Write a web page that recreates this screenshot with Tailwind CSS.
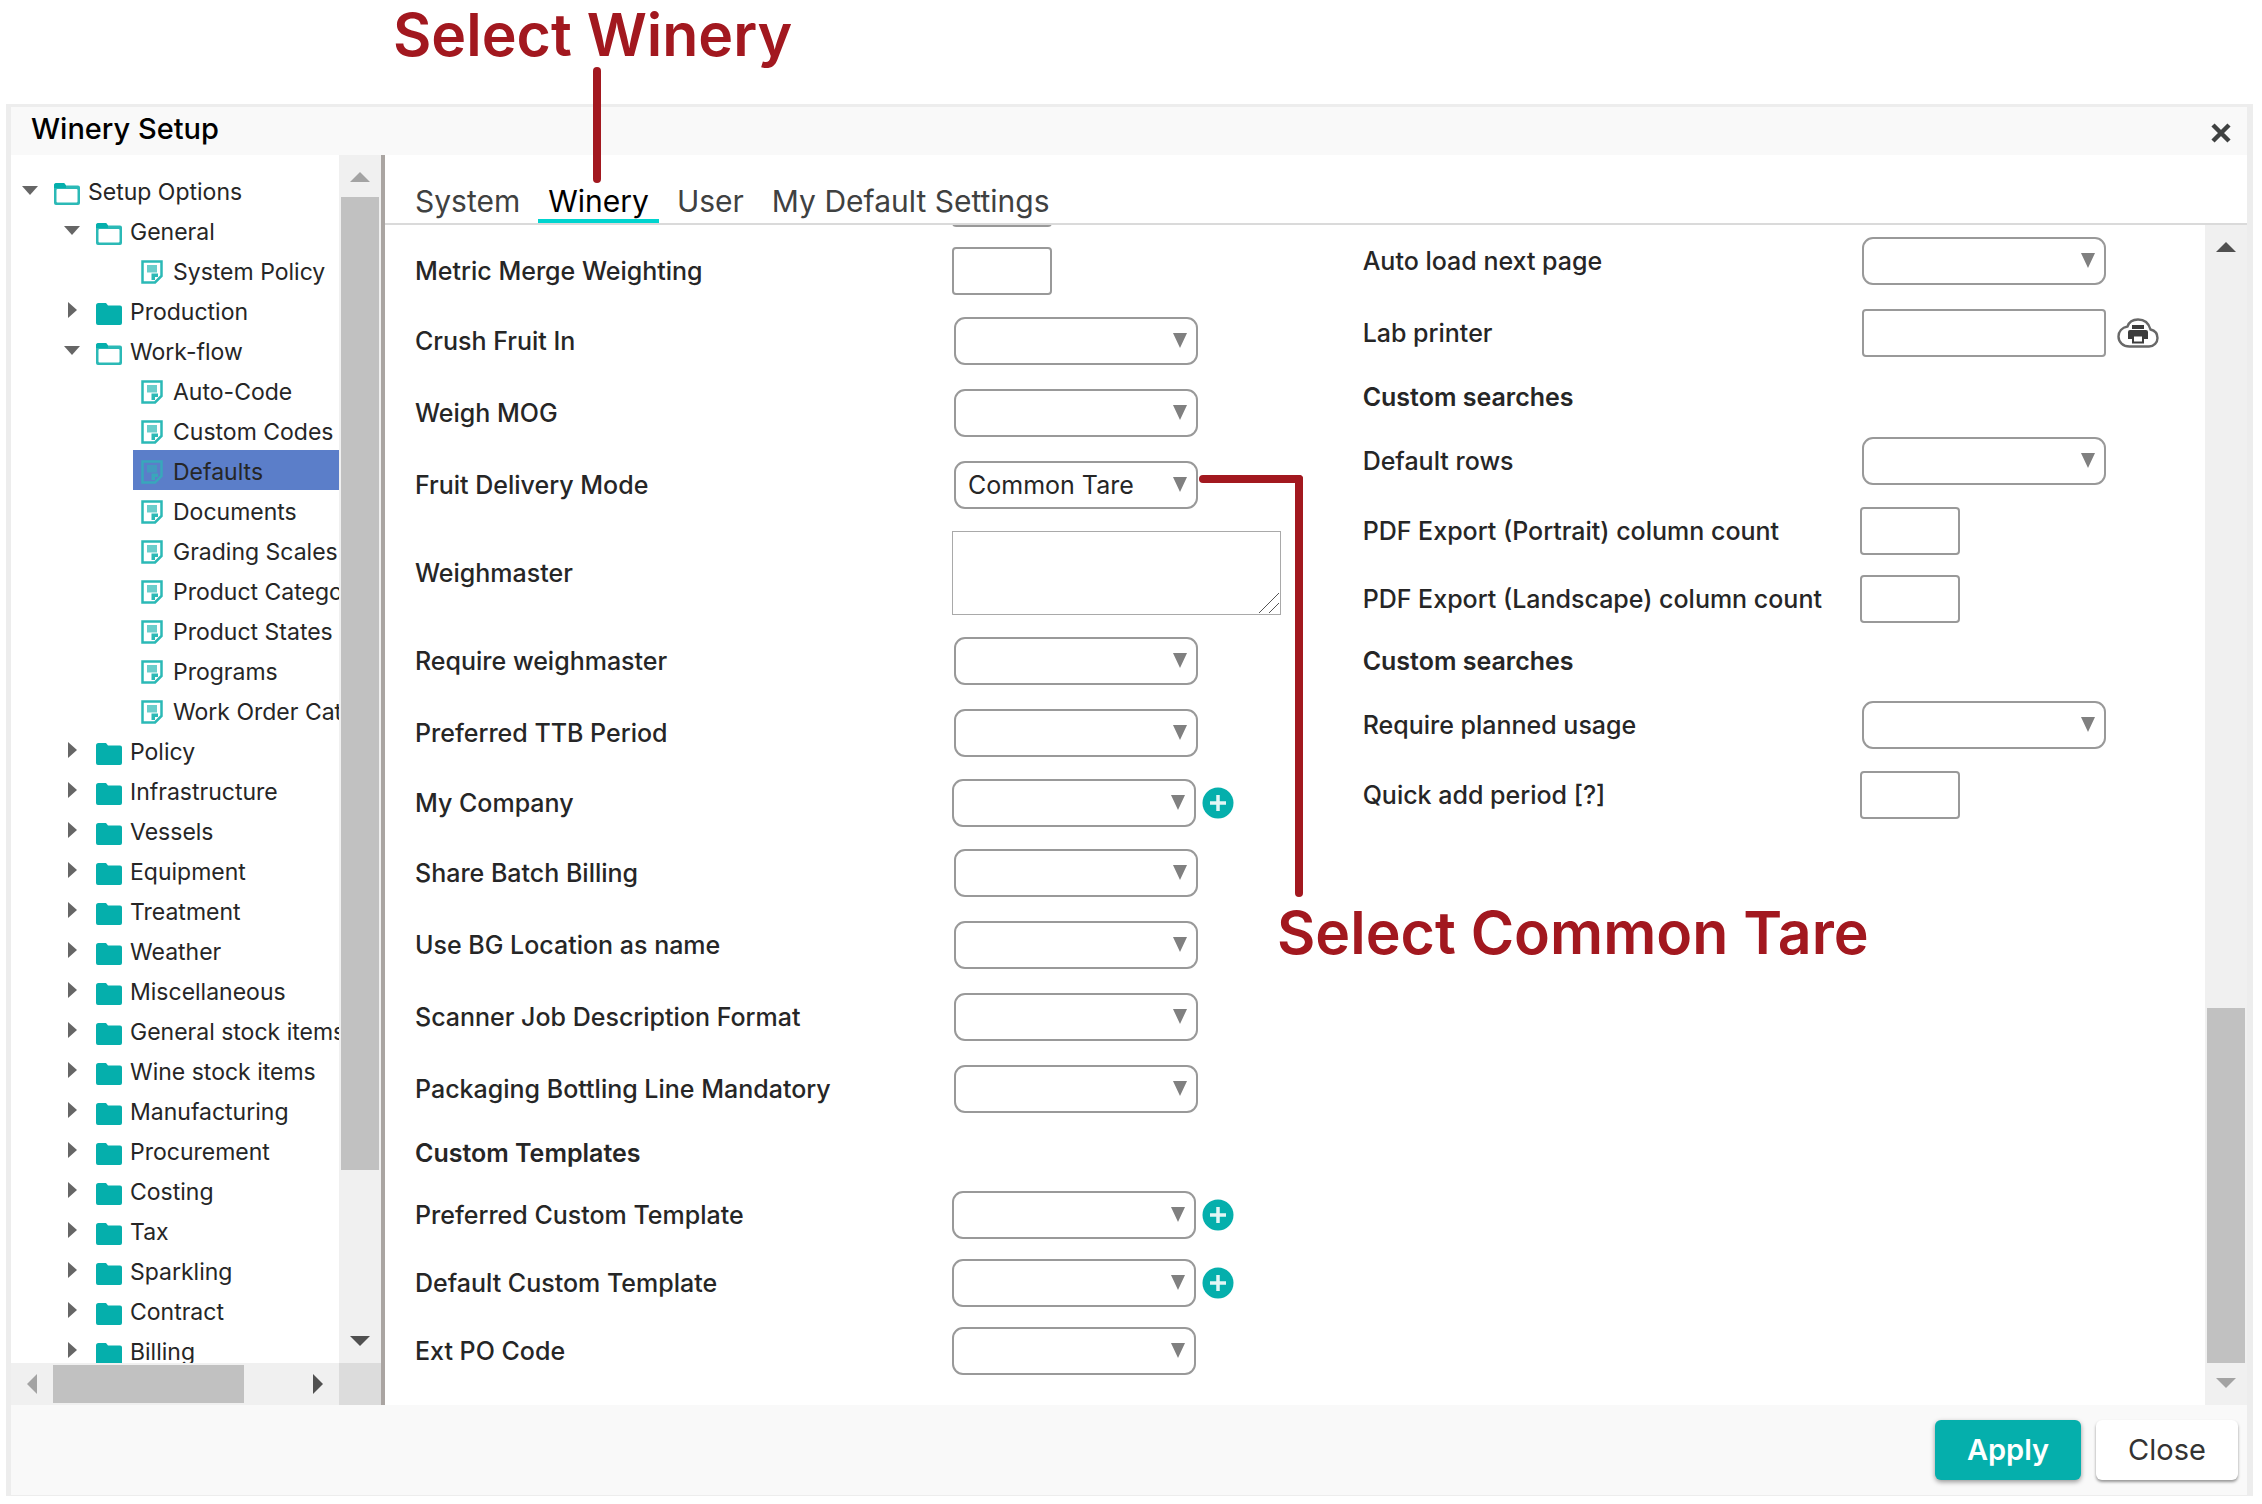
<!DOCTYPE html>
<html lang="en">
<head>
  <title>Winery Setup</title>
  <meta charset="utf-8">
  <meta name="viewport" content="width=device-width, initial-scale=1.0">
  <script src="https://cdn.jsdelivr.net/npm/@tailwindcss/browser@4"></script>
</head>

<body class="bg-white font-['Inter','Open_Sans',sans-serif] text-[#262626]">

  <!-- icons shared by the tree and the form -->
  <svg class="hidden">
    <symbol id="folder-open" viewBox="0 0 28 24">
      <path d="M1 3.500Q1 1 3.500 1H11L13 3.500H25Q27 3.500 27 5.500V21Q27 23 25 23H3Q1 23 1 21Z" fill="#2bb9b6"/>
      <path d="M1 3.500Q1 1 3.500 1H11L13 3.500V6H1Z" fill="#05afac"/>
      <rect x="3.500" y="7" width="21" height="13.500" rx="1" fill="#fff"/>
    </symbol>
    <symbol id="folder" viewBox="0 0 28 24">
      <path d="M1 3.500Q1 1 3.500 1H11L13 3.500H25Q27 3.500 27 5.500V21Q27 23 25 23H3Q1 23 1 21Z" fill="#05afac"/>
    </symbol>
    <symbol id="page" viewBox="0 0 22 24">
      <path d="M1.500 1.500H20.500V16L14 22.500H1.500Z" fill="none" stroke="#2bb9b6" stroke-width="2.500"/>
      <path d="M6 5H16V12.500H6Z" fill="#2bb9b6" fill-opacity=".7"/>
      <path d="M10.500 20V13.500H17V17H14V20Z" fill="#2bb9b6"/>
    </symbol>
    <symbol id="plus" viewBox="0 0 32 32">
      <circle cx="16" cy="16" r="15.500" fill="#05afac"/>
      <path d="M16 8V24M8 16H24" stroke="#e4f6f5" stroke-width="3.500"/>
    </symbol>
    <symbol id="cloud-print" viewBox="0 0 42 30">
      <path d="M12.500 28.500H32C37 28.500 40.500 24.500 40.500 20C40.500 15 37.500 12.500 33.500 11.500C32 6 28 1.500 21 1.500C15.500 1.500 12 4 10.500 8.500C5 9.500 1.500 13.500 1.500 18.500C1.500 24 6 28.500 12.500 28.500Z" fill="none" stroke="#686868" stroke-width="2.400"/>
      <path d="M15 7H27V11H15Z" fill="#3c3c3c"/>
      <path d="M13 12H29Q31 12 31 14V21H26V18H16V21H11V14Q11 12 13 12Z" fill="#3c3c3c"/>
      <path d="M16 17.500H26V24.500H16Z" fill="#fff" stroke="#3c3c3c" stroke-width="2"/>
    </symbol>
  </svg>

  <div class="relative flex h-screen flex-col pt-[104px] pr-[9px] pb-2 pl-[6px]">
    <div class="flex min-h-0 flex-1 flex-col border-t-3 border-r-6 border-b border-l-5 border-[#ededed] bg-white">

      <header class="flex h-12 shrink-0 items-start justify-between bg-[#f9f9f9] pr-4 pl-5">
        <h1 class="text-[29px] leading-[44px] font-medium text-black">Winery Setup</h1>
        <button type="button" aria-label="Close dialog" class="mt-4">
          <svg class="size-5" viewBox="0 0 20 20"><path d="M2 2L18 18M18 2L2 18" stroke="#3f4141" stroke-width="4.500"/></svg>
        </button>
      </header>

      <div class="flex min-h-0 flex-1">

        <!-- setup tree -->
        <aside class="flex w-[374px] shrink-0 flex-col border-r-4 border-[#aaa5a2]">
          <div class="flex min-h-0 flex-1">
            <ul id="tree" class="min-w-0 flex-1 overflow-hidden pt-[15px] text-[23px] leading-8 whitespace-nowrap"></ul>
            <div class="flex w-[42px] flex-col bg-[#f0f0f0] px-[2px]">
              <svg class="h-[42px] w-full shrink-0" viewBox="0 0 38 42"><path d="M9 27L19 17L29 27Z" fill="#a3a3a3"/></svg>
              <div class="h-[973px] bg-[#c1c1c1]"></div>
              <svg class="mt-auto h-[42px] w-full shrink-0" viewBox="0 0 38 42"><path d="M9 15H29L19 25Z" fill="#505050"/></svg>
            </div>
          </div>
          <div class="flex h-[42px] shrink-0 bg-[#f0f0f0]">
            <svg class="h-full w-[42px] shrink-0" viewBox="0 0 42 42"><path d="M26 11V31L16 21Z" fill="#a3a3a3"/></svg>
            <div class="my-[2px] w-[191px] bg-[#c1c1c1]"></div>
            <svg class="ml-auto h-full w-[42px] shrink-0" viewBox="0 0 42 42"><path d="M16 11V31L26 21Z" fill="#505050"/></svg>
            <div class="w-[42px] shrink-0 bg-[#dcdcdc]"></div>
          </div>
        </aside>

        <main class="flex min-w-0 flex-1 flex-col">
          <nav class="flex h-[70px] shrink-0 items-end gap-2 border-b-2 border-[#dadada] pl-5 text-[30px] leading-9 text-[#3f4141]">
            <a href="#" class="border-b-4 border-transparent px-[10px]">System</a>
            <a href="#" class="border-b-4 border-[#00d4cf] px-[10px] text-black">Winery</a>
            <a href="#" class="border-b-4 border-transparent px-[10px]">User</a>
            <a href="#" class="border-b-4 border-transparent px-[10px]">My Default Settings</a>
          </nav>

          <div class="flex min-h-0 flex-1">
            <form class="grid min-w-0 flex-1 grid-cols-[9fr_8fr] items-start overflow-hidden pl-[30px] text-[25px] leading-8 font-medium">
              <div id="left" class="-mt-14"></div>
              <div id="right"></div>
            </form>
            <div class="flex w-[42px] shrink-0 flex-col bg-[#f0f0f0] px-[2px]">
              <svg class="h-[42px] w-full shrink-0" viewBox="0 0 38 42"><path d="M9 27L19 17L29 27Z" fill="#505050"/></svg>
              <div class="mt-auto h-[355px] bg-[#c1c1c1]"></div>
              <svg class="h-[42px] w-full shrink-0" viewBox="0 0 38 42"><path d="M9 15H29L19 25Z" fill="#a3a3a3"/></svg>
            </div>
          </div>
        </main>
      </div>

      <footer class="flex h-[90px] shrink-0 items-center justify-end gap-[15px] bg-[#f9f9f9] pr-[9px] text-[29px]">
        <button type="button" class="h-[60px] w-[146px] rounded-md bg-[#05afac] font-semibold text-white shadow-[0_2px_5px_rgba(0,0,0,0.4)]">Apply</button>
        <button type="button" class="h-[60px] w-[142px] rounded-md bg-white text-[#333] shadow-[0_2px_3px_rgba(0,0,0,0.4)]">Close</button>
      </footer>
    </div>

    <!-- callouts -->
    <p class="absolute top-0 left-[393px] text-[59px] leading-[70px] font-semibold whitespace-nowrap text-[#a2181f]">Select Winery</p>
    <div class="absolute top-[67px] left-[593px] h-[116px] w-2 rounded-full bg-[#a2181f]"></div>
    <div class="absolute top-[475px] left-[1199px] h-[422px] w-[104px]">
      <div class="absolute top-0 left-0 h-2 w-full rounded-full bg-[#a2181f]"></div>
      <div class="absolute top-0 right-0 h-full w-2 rounded-full bg-[#a2181f]"></div>
    </div>
    <p class="absolute top-[898px] left-[1277px] text-[59px] leading-[70px] font-semibold whitespace-nowrap text-[#a2181f]">Select Common Tare</p>
  </div>

  <script>
    // [level, name]; level 2 entries are leaves
    const open = ['Setup Options', 'General', 'Work-flow'];
    const nodes = [
      [0, 'Setup Options'], [1, 'General'], [2, 'System Policy'], [1, 'Production'], [1, 'Work-flow'],
      [2, 'Auto-Code'], [2, 'Custom Codes'], [2, 'Defaults'], [2, 'Documents'], [2, 'Grading Scales'],
      [2, 'Product Categories'], [2, 'Product States'], [2, 'Programs'], [2, 'Work Order Categories'],
      [1, 'Policy'], [1, 'Infrastructure'], [1, 'Vessels'], [1, 'Equipment'], [1, 'Treatment'], [1, 'Weather'],
      [1, 'Miscellaneous'], [1, 'General stock items'], [1, 'Wine stock items'], [1, 'Manufacturing'],
      [1, 'Procurement'], [1, 'Costing'], [1, 'Tax'], [1, 'Sparkling'], [1, 'Contract'], [1, 'Billing'],
    ];
    const indent = ['pl-[9px]', 'pl-[51px]', 'pl-[122px]'];

    document.getElementById('tree').innerHTML = nodes.map(([level, name]) => {
      const text = `<span class="pt-1">${name}</span>`;
      if (level === 2) {
        const active = name === 'Defaults';
        return `<li class="${indent[2]}"><a href="#" class="flex h-10 items-center gap-[10px] pl-2 ${active ? 'bg-[#5b7ec9]' : ''}">
          <svg class="mt-1 h-6 w-[22px] shrink-0 ${active ? 'opacity-70' : ''}"><use href="#page"/></svg>${text}</a></li>`;
      }
      const isOpen = open.includes(name);
      const arrow = isOpen ? 'M2 6H18L10 15Z' : 'M6 2V18L15 10Z';
      return `<li class="${indent[level]}"><a href="#" class="flex h-10 items-center">
        <svg class="size-5 shrink-0" viewBox="0 0 20 20"><path d="${arrow}" fill="#666"/></svg>
        <svg class="mt-2 mr-[7px] ml-[13px] h-6 w-7 shrink-0"><use href="#${isOpen ? 'folder-open' : 'folder'}"/></svg>${text}</a></li>`;
    }).join('');

    const box = 'h-12 border-2 border-[#999] bg-white';
    const select = (id, text) => `<div class="relative">
      <select id="${id}" class="${box} w-[244px] appearance-none rounded-[11px] pl-3 align-top font-normal"><option>${text}</option></select>
      <svg class="pointer-events-none absolute top-4 right-[11px] h-[15px] w-[14px]" viewBox="0 0 14 15"><path d="M0 0H14L7 15Z" fill="#808080"/></svg></div>`;
    const controls = {
      small: id => `<input id="${id}" type="text" class="${box} w-[100px] rounded">`,
      select: (id, text) => `<div class="ml-[2px]">${select(id, text)}</div>`,
      add: id => `${select(id, '')}<button type="button" aria-label="Add" class="ml-[6px]"><svg class="size-8"><use href="#plus"/></svg></button>`,
      plain: id => select(id, ''),
      area: id => `<div class="relative"><textarea id="${id}" class="block h-[84px] w-[329px] resize-none border border-[#a9a9a9]"></textarea>
        <svg class="pointer-events-none absolute right-[2px] bottom-[2px] size-5" viewBox="0 0 20 20"><path d="M0 20L20 0M10 20L20 10" stroke="#555"/></svg></div>`,
      printer: id => `<input id="${id}" type="text" class="${box} ml-[2px] w-[244px] rounded">
        <button type="button" aria-label="Choose printer" class="ml-[11px]"><svg class="h-[30px] w-[42px]"><use href="#cloud-print"/></svg></button>`,
    };
    const heights = { small: 'h-[68px]', select: 'h-[72px]', add: 'h-[68px]', plain: 'h-[68px]', area: 'h-[104px]', printer: 'h-[72px]' };

    function render(target, labelWidth, rows) {
      document.getElementById(target).innerHTML = rows.map(([type, label, text], i) => {
        if (type === 'heading') return `<h2 class="flex h-14 items-center font-semibold">${label}</h2>`;
        const id = `${target}-${i}`;
        return `<div class="flex items-center ${heights[type]}">
          <label for="${id}" class="shrink-0 ${labelWidth}">${label}</label>${controls[type](id, text || '')}</div>`;
      }).join('');
    }

    render('left', 'w-[537px]', [
      ['small', ''],
      ['small', 'Metric Merge Weighting'],
      ['select', 'Crush Fruit In'],
      ['select', 'Weigh MOG'],
      ['select', 'Fruit Delivery Mode', 'Common Tare'],
      ['area', 'Weighmaster'],
      ['select', 'Require weighmaster'],
      ['select', 'Preferred TTB Period'],
      ['add', 'My Company'],
      ['select', 'Share Batch Billing'],
      ['select', 'Use BG Location as name'],
      ['select', 'Scanner Job Description Format'],
      ['select', 'Packaging Bottling Line Mandatory'],
      ['heading', 'Custom Templates'],
      ['add', 'Preferred Custom Template'],
      ['add', 'Default Custom Template'],
      ['plain', 'Ext PO Code'],
    ]);
    render('right', 'w-[497px]', [
      ['select', 'Auto load next page'],
      ['printer', 'Lab printer'],
      ['heading', 'Custom searches'],
      ['select', 'Default rows'],
      ['small', 'PDF Export (Portrait) column count'],
      ['small', 'PDF Export (Landscape) column count'],
      ['heading', 'Custom searches'],
      ['select', 'Require planned usage'],
      ['small', 'Quick add period [?]'],
    ]);
  </script>
</body>
</html>
